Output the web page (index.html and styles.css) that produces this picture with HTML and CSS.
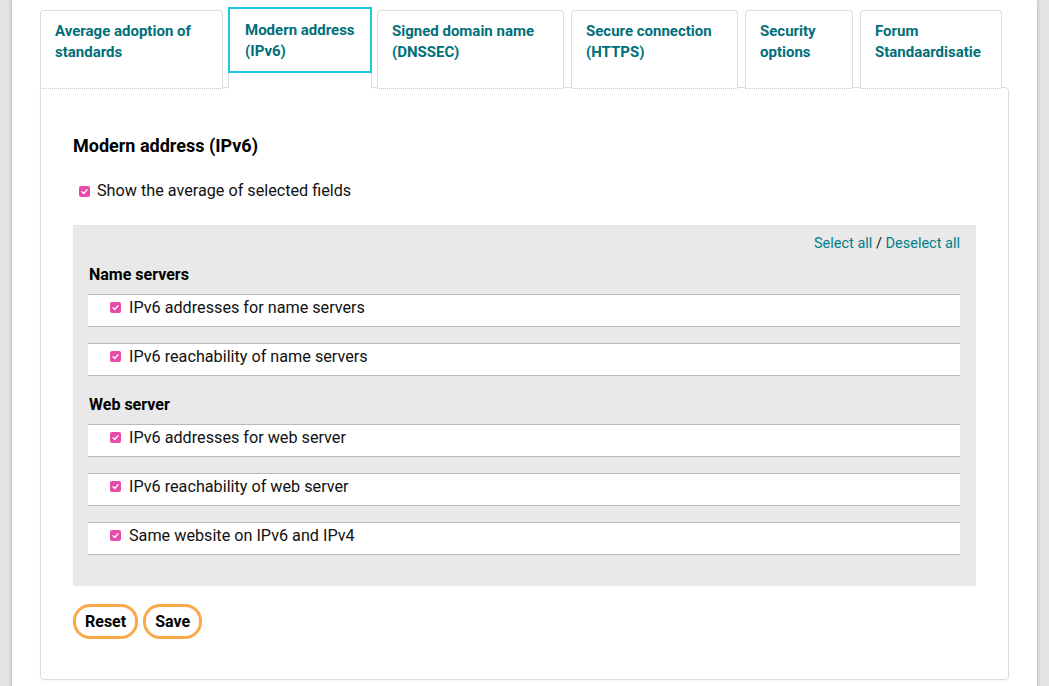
FILE: index.html
```html
<!DOCTYPE html>
<html lang="en">
<head>
<meta charset="utf-8">
<title>Modern address (IPv6)</title>
<link rel="stylesheet" href="styles.css">
</head>
<body>
<div class="page">
  <ul class="tabs">
    <li class="tab tab-adoption"><a class="tab-link">Average adoption of standards</a></li>
    <li class="tab tab-ipv6 is-active"><a class="tab-link">Modern address (IPv6)</a></li>
    <li class="tab tab-dnssec"><a class="tab-link">Signed domain name (DNSSEC)</a></li>
    <li class="tab tab-https"><a class="tab-link">Secure connection (HTTPS)</a></li>
    <li class="tab tab-security"><a class="tab-link">Security options</a></li>
    <li class="tab tab-forum"><a class="tab-link">Forum Standaardisatie</a></li>
  </ul>
  <section class="panel">
    <h2 class="panel-title">Modern address (IPv6)</h2>
    <label class="avg-line">
      <span class="cb"><svg viewBox="0 0 11 11" width="11" height="11"><path d="M3 5.8 L4.8 7.5 L8 3.8" fill="none" stroke="#fff" stroke-width="1.3" stroke-linecap="round" stroke-linejoin="round"/></svg></span>
      <span>Show the average of selected fields</span>
    </label>
    <div class="fields">
      <div class="select-links"><a class="link">Select all</a> / <a class="link">Deselect all</a></div>
      <h3 class="group-title">Name servers</h3>
      <label class="field-row">
        <span class="cb"><svg viewBox="0 0 11 11" width="11" height="11"><path d="M3 5.8 L4.8 7.5 L8 3.8" fill="none" stroke="#fff" stroke-width="1.3" stroke-linecap="round" stroke-linejoin="round"/></svg></span>
        <span>IPv6 addresses for name servers</span>
      </label>
      <label class="field-row">
        <span class="cb"><svg viewBox="0 0 11 11" width="11" height="11"><path d="M3 5.8 L4.8 7.5 L8 3.8" fill="none" stroke="#fff" stroke-width="1.3" stroke-linecap="round" stroke-linejoin="round"/></svg></span>
        <span>IPv6 reachability of name servers</span>
      </label>
      <h3 class="group-title">Web server</h3>
      <label class="field-row">
        <span class="cb"><svg viewBox="0 0 11 11" width="11" height="11"><path d="M3 5.8 L4.8 7.5 L8 3.8" fill="none" stroke="#fff" stroke-width="1.3" stroke-linecap="round" stroke-linejoin="round"/></svg></span>
        <span>IPv6 addresses for web server</span>
      </label>
      <label class="field-row">
        <span class="cb"><svg viewBox="0 0 11 11" width="11" height="11"><path d="M3 5.8 L4.8 7.5 L8 3.8" fill="none" stroke="#fff" stroke-width="1.3" stroke-linecap="round" stroke-linejoin="round"/></svg></span>
        <span>IPv6 reachability of web server</span>
      </label>
      <label class="field-row">
        <span class="cb"><svg viewBox="0 0 11 11" width="11" height="11"><path d="M3 5.8 L4.8 7.5 L8 3.8" fill="none" stroke="#fff" stroke-width="1.3" stroke-linecap="round" stroke-linejoin="round"/></svg></span>
        <span>Same website on IPv6 and IPv4</span>
      </label>
    </div>
    <div class="buttons">
      <button class="btn" type="button">Reset</button>
      <button class="btn" type="button">Save</button>
    </div>
  </section>
</div>
</body>
</html>
```

FILE: styles.css
```css
* { box-sizing: border-box; }

html, body {
  margin: 0;
  padding: 0;
}

body {
  background: #e3e3e3;
  font-family: Roboto, "Liberation Sans", Arial, sans-serif;
  color: #111;
}

.page {
  width: 1025px;
  margin-left: 12px;
  background: #fff;
  padding: 7px 28px 20px;
  box-shadow: 0 0 4px rgba(0, 0, 0, 0.25);
  min-height: 700px;
}

/* Tabs */
.tabs {
  list-style: none;
  margin: 0 0 -2px;
  padding: 0;
  display: flex;
  align-items: flex-end;
}

.tab {
  position: relative;
  z-index: 1;
  height: 79px;
  background: #fff;
  border: 1px solid #dcdcdc;
  border-bottom: 1px dotted #c8c8c8;
  border-radius: 4px 4px 0 0;
  margin-right: 7px;
}

.tab-link {
  display: block;
  padding: 10px 6px 0 14px;
  font-size: 15px;
  line-height: 21px;
  font-weight: 700;
  color: #006f7a;
  cursor: pointer;
}

.tab-adoption { width: 183px; margin-right: 5px; }
.tab-ipv6 { width: 144px; margin-right: 5px; }
.tab-dnssec { width: 187px; }
.tab-https { width: 167px; }
.tab-security { width: 108px; }
.tab-forum { width: 142px; margin-right: 0; }

.tab.is-active {
  height: 82px;
  border-bottom: none;
  border-radius: 0;
}

.tab.is-active .tab-link {
  margin: -1px -1px 0;
  height: 66px;
  border: 2px solid #1cc6dd;
  padding: 11px 4px 0 15px;
}

/* Panel */
.panel {
  border: 1px solid #dcdcdc;
  border-radius: 0 4px 4px 4px;
  padding: 46px 32px 40px;
  box-shadow: 0 1px 2px rgba(0, 0, 0, 0.04);
}

.panel-title {
  margin: 0;
  font-size: 18px;
  line-height: 24px;
  font-weight: 700;
  color: #000;
}

.avg-line {
  display: flex;
  align-items: center;
  margin: 21px 0 22px 6px;
  font-size: 16.2px;
  line-height: 24px;
  color: #111;
}

.cb {
  display: inline-flex;
  width: 11px;
  height: 11px;
  border-radius: 2px;
  background: #e64ca8;
  margin-right: 7px;
  flex: none;
}

.cb svg { display: block; }

/* Fields box */
.fields {
  background: #e9e9e9;
  padding: 9px 16px 31px 15px;
}

.select-links {
  text-align: right;
  font-size: 14.5px;
  line-height: 20px;
  color: #111;
}

.link {
  color: #00808a;
  cursor: pointer;
}

.group-title {
  margin: 11px 0 9px 1px;
  font-size: 16px;
  line-height: 20px;
  font-weight: 700;
  color: #000;
}

.field-row + .group-title { margin-top: 19px; }

.field-row {
  display: flex;
  align-items: center;
  background: #fff;
  border-top: 1px solid #b9b9b9;
  border-bottom: 1px solid #b9b9b9;
  padding: 2px 0 8px 22px;
  font-size: 16.2px;
  line-height: 21px;
  color: #111;
}

.field-row + .field-row { margin-top: 16px; }

.field-row .cb { margin-right: 8px; }

/* Buttons */
.buttons {
  display: flex;
  gap: 5px;
  margin-top: 18px;
}

.btn {
  font-family: Roboto, "Liberation Sans", Arial, sans-serif;
  font-size: 16px;
  font-weight: 700;
  line-height: 20px;
  color: #000;
  background: #fff;
  border: 3px solid #f9a84a;
  border-radius: 17px;
  height: 35px;
  padding: 0 9px;
  cursor: pointer;
}
```
